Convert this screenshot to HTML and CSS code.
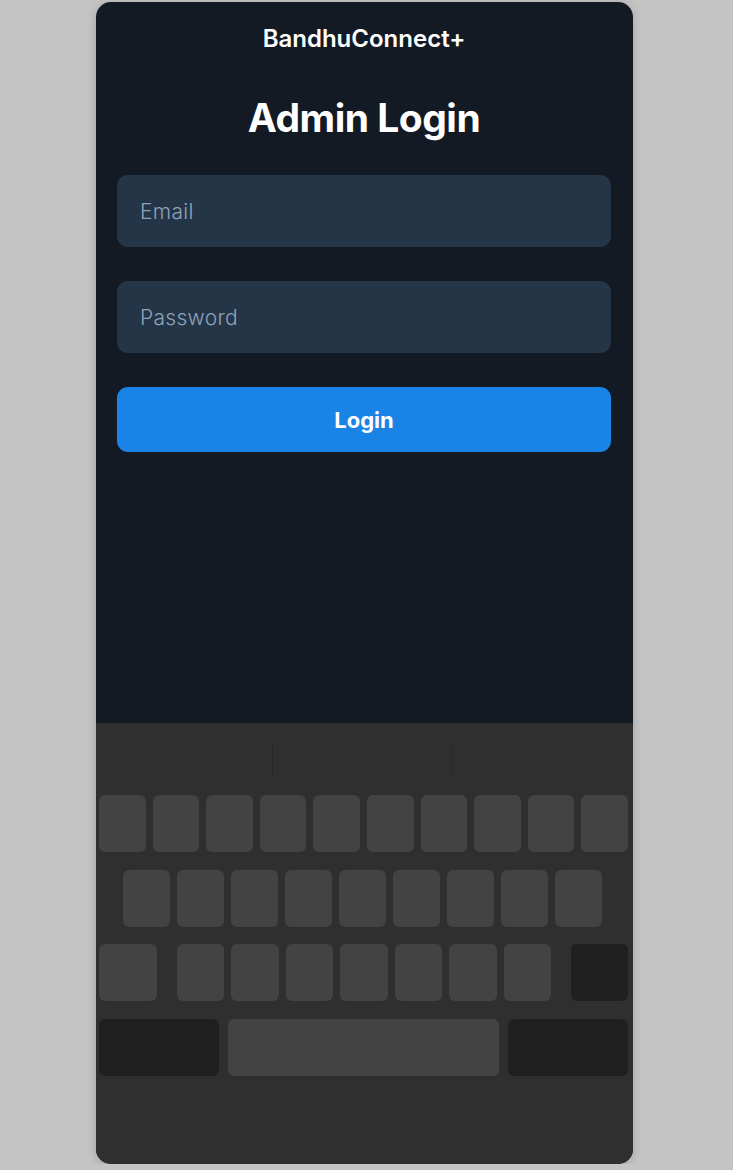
FILE: index.html
```html
<!DOCTYPE html>
<html lang="en">
<head>
    <meta charset="UTF-8">
    <meta name="viewport" content="width=device-width, initial-scale=1.0">
    <title>BandhuConnect+ Admin Login</title>
    <link rel="stylesheet" href="styles.css">
</head>
<body>
    <div class="phone">
        <div class="screen">
            <div class="brand">BandhuConnect+</div>
            <h1>Admin Login</h1>

            <form class="login-form" onsubmit="return false">
                <input type="email" placeholder="Email">
                <input type="password" placeholder="Password">
                <button type="submit">Login</button>
            </form>
        </div>

        <div class="keyboard">
            <div class="suggestions">
                <span class="divider"></span>
                <span class="divider"></span>
            </div>
            <div class="key-row row-1">
                <span class="key"></span><span class="key"></span><span class="key"></span><span class="key"></span><span class="key"></span>
                <span class="key"></span><span class="key"></span><span class="key"></span><span class="key"></span><span class="key"></span>
            </div>
            <div class="key-row row-2">
                <span class="key"></span><span class="key"></span><span class="key"></span><span class="key"></span><span class="key"></span>
                <span class="key"></span><span class="key"></span><span class="key"></span><span class="key"></span>
            </div>
            <div class="key-row row-3">
                <span class="key shift"></span>
                <div class="letters">
                    <span class="key"></span><span class="key"></span><span class="key"></span><span class="key"></span>
                    <span class="key"></span><span class="key"></span><span class="key"></span>
                </div>
                <span class="key dark backspace"></span>
            </div>
            <div class="key-row row-4">
                <span class="key dark wide"></span>
                <span class="key space"></span>
                <span class="key dark wide"></span>
            </div>
        </div>
    </div>
</body>
</html>
```

FILE: styles.css
```css
* {
    box-sizing: border-box;
}

body {
    margin: 0;
    background-color: #c4c4c4;
    font-family: "Inter", "Lato", sans-serif;
}

.phone {
    width: 537px;
    height: 1162px;
    margin: 2px 0 0 96px;
    border-radius: 15px;
    overflow: hidden;
    display: flex;
    flex-direction: column;
    background-color: #131a23;
    box-shadow: 0 2px 10px rgba(0, 0, 0, 0.18);
}

.screen {
    height: 721px;
    padding: 24px 22px 0 21px;
    color: #fff;
}

.brand {
    text-align: center;
    font-size: 24px;
    font-weight: 600;
    letter-spacing: 0;
    line-height: 26px;
}

h1 {
    margin: 44px 0 35px;
    text-align: center;
    font-size: 39px;
    font-weight: 700;
    letter-spacing: -0.5px;
    line-height: 44px;
}

.login-form {
    display: flex;
    flex-direction: column;
    gap: 34px;
}

.login-form input {
    height: 72px;
    padding: 0 23px;
    border: none;
    border-radius: 11px;
    background-color: #253548;
    color: #fff;
    font-family: inherit;
    font-size: 21px;
    font-weight: 300;
    letter-spacing: 0.3px;
    outline: none;
}

.login-form input::placeholder {
    color: #8ea3b9;
}

.login-form button {
    height: 65px;
    border: none;
    border-radius: 11px;
    background-color: #1a84e6;
    color: #fff;
    font-family: inherit;
    font-size: 22px;
    font-weight: 700;
    cursor: pointer;
}

.keyboard {
    flex: 1;
    background-color: #2f2f2f;
    padding: 0 5px 0 3px;
}

.suggestions {
    height: 72px;
    display: flex;
    justify-content: center;
    gap: 179px;
    padding-top: 22px;
    padding-right: 2px;
}

.suggestions .divider {
    width: 1px;
    height: 32px;
    background-color: #282828;
}

.key-row {
    display: flex;
    gap: 7px;
    margin-bottom: 18px;
}

.key {
    display: block;
    height: 57px;
    border-radius: 6px;
    background-color: #434343;
}

.row-1 .key {
    flex: 1;
}

.row-2 {
    justify-content: center;
    padding-right: 3px;
    margin-bottom: 17px;
}

.row-2 .key {
    width: 47px;
}

.row-3 {
    gap: 20px;
}

.row-3 .letters {
    flex: 1;
    display: flex;
    gap: 7px;
}

.row-3 .letters .key {
    flex: 1;
}

.shift {
    width: 58px;
}

.backspace {
    width: 57px;
}

.key.dark {
    background-color: #202020;
}

.row-4 {
    gap: 9px;
}

.row-4 .wide {
    width: 120px;
}

.row-4 .space {
    flex: 1;
}
```
